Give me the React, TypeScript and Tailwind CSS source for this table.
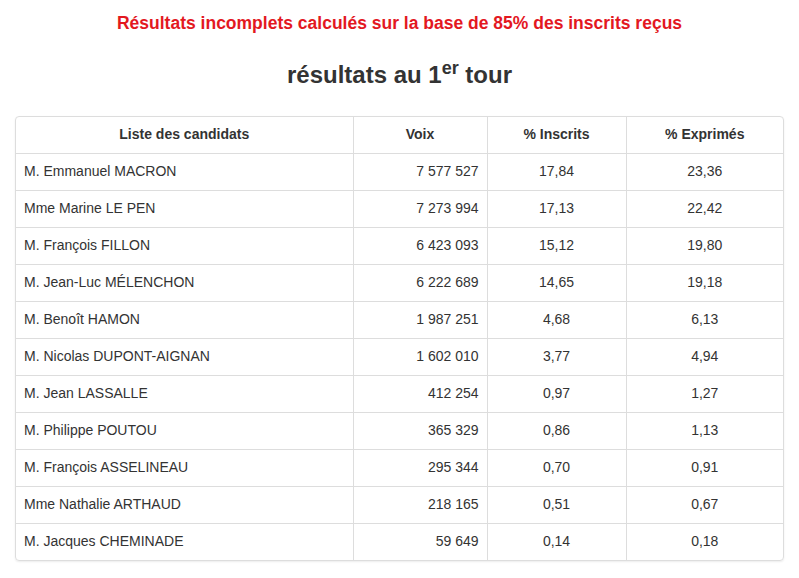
const rows = [
  ['M. Emmanuel MACRON', '7 577 527', '17,84', '23,36'],
  ['Mme Marine LE PEN', '7 273 994', '17,13', '22,42'],
  ['M. François FILLON', '6 423 093', '15,12', '19,80'],
  ['M. Jean-Luc MÉLENCHON', '6 222 689', '14,65', '19,18'],
  ['M. Benoît HAMON', '1 987 251', '4,68', '6,13'],
  ['M. Nicolas DUPONT-AIGNAN', '1 602 010', '3,77', '4,94'],
  ['M. Jean LASSALLE', '412 254', '0,97', '1,27'],
  ['M. Philippe POUTOU', '365 329', '0,86', '1,13'],
  ['M. François ASSELINEAU', '295 344', '0,70', '0,91'],
  ['Mme Nathalie ARTHAUD', '218 165', '0,51', '0,67'],
  ['M. Jacques CHEMINADE', '59 649', '0,14', '0,18'],
];

export default function App() {
  return (
    <div className="min-h-screen bg-white text-[#333] font-['Liberation_Sans',Arial,sans-serif] text-[14px]">
      <p className="pt-[12px] text-center text-[17.5px] leading-[22px] font-bold text-[#e3181f]">
        Résultats incomplets calculés sur la base de 85% des inscrits reçus
      </p>
      <h2 className="mt-[27px] text-center text-[24px] leading-[28px] font-bold text-[#333]">
        résultats au 1<sup className="text-[18px]">er</sup> tour
      </h2>
      <div className="mx-[15px] mt-[27px] border border-[#ddd] rounded-[4px] shadow-[0_1px_2px_rgba(0,0,0,0.08)] overflow-hidden">
        <table className="w-full border-collapse table-fixed">
          <colgroup>
            <col className="w-[337px]" />
            <col className="w-[134px]" />
            <col className="w-[139px]" />
            <col />
          </colgroup>
          <thead>
            <tr className="h-[36px]">
              <th className="h-[36px] font-bold text-center px-2 border-b border-r border-[#ddd]">Liste des candidats</th>
              <th className="font-bold text-center px-2 border-b border-r border-[#ddd]">Voix</th>
              <th className="font-bold text-center px-2 border-b border-r border-[#ddd]">% Inscrits</th>
              <th className="font-bold text-center px-2 border-b border-[#ddd]">% Exprimés</th>
            </tr>
          </thead>
          <tbody>
            {rows.map((r, i) => (
              <tr key={r[0]} className="h-[37px]">
                <td className={`text-left px-2 border-r border-[#ddd] ${i < rows.length - 1 ? 'border-b' : ''}`}>{r[0]}</td>
                <td className={`text-right px-2 border-r border-[#ddd] ${i < rows.length - 1 ? 'border-b' : ''}`}>{r[1]}</td>
                <td className={`text-center px-2 border-r border-[#ddd] ${i < rows.length - 1 ? 'border-b' : ''}`}>{r[2]}</td>
                <td className={`text-center px-2 border-[#ddd] ${i < rows.length - 1 ? 'border-b' : ''}`}>{r[3]}</td>
              </tr>
            ))}
          </tbody>
        </table>
      </div>
    </div>
  );
}
